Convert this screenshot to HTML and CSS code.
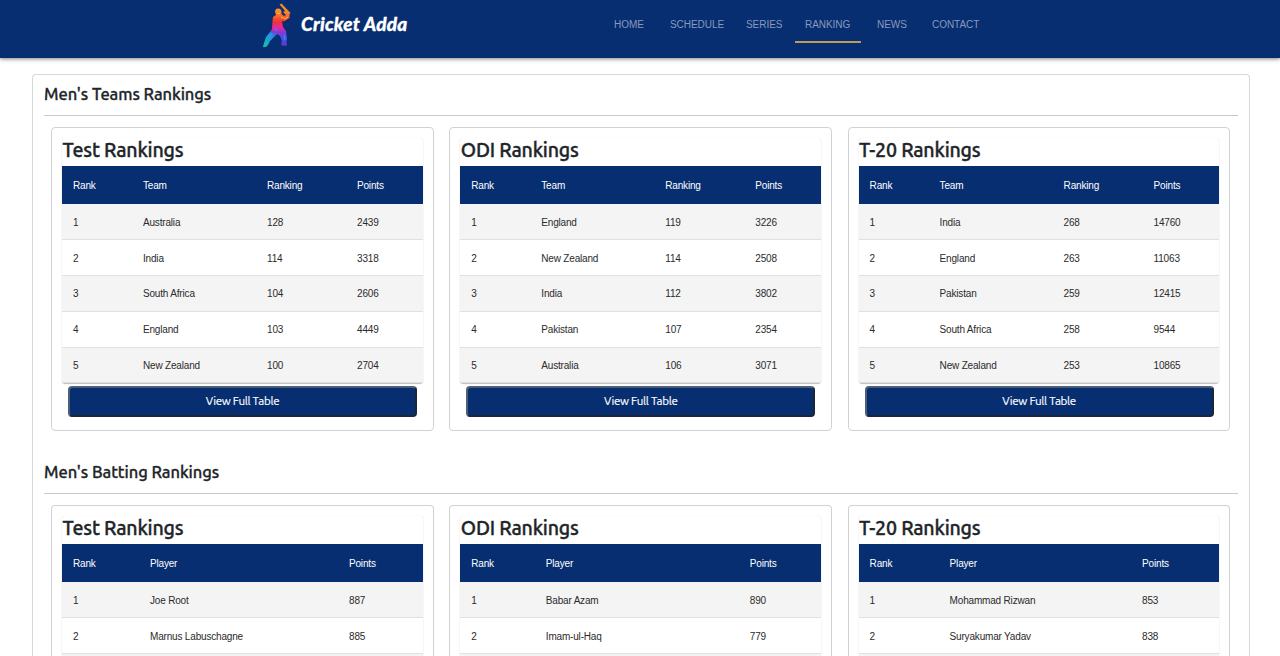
FILE: index.html
```
<!DOCTYPE html>
<html lang="en">
<head>
<meta charset="utf-8">
<title>Cricket Adda</title>
<link rel="stylesheet" href="styles.css">
</head>
<body>
<header class="topbar">
  <a class="brand">
    <svg class="batsman" width="30" height="46" viewBox="0 0 30 46">
      <defs>
        <linearGradient id="kit" x1="0" y1="0" x2="0" y2="1">
          <stop offset="0" stop-color="#fb9a35"/><stop offset=".2" stop-color="#f96a28"/>
          <stop offset=".36" stop-color="#f0303c"/><stop offset=".5" stop-color="#e52a9b"/>
          <stop offset=".64" stop-color="#8a35d6"/><stop offset=".8" stop-color="#3c55e8"/>
          <stop offset="1" stop-color="#6a32c4"/>
        </linearGradient>
        <linearGradient id="pad" x1="1" y1="0" x2="0" y2="1">
          <stop offset="0" stop-color="#4558e8"/><stop offset=".45" stop-color="#1c9ae0"/><stop offset="1" stop-color="#16c79a"/>
        </linearGradient>
      </defs>
      <path fill="#ef8d27" d="M16.500 1.500L18.500.500L27.500 10L25.500 12Z"/>
      <path fill="url(#kit)" d="M12 9Q12 5.500 15 5.500Q18.500 5.500 18.500 9L18.500 11L21 13L23 12L20 9L22 8L26.500 11L26.500 15L21 18.500L19 18L20 24L23 28L24 35L23.500 39L24 42L22 43L18 42L19 38L17 33L14 31L9 33L6 31L9 26L9.500 18L10 14L13 12Z"/>
      <path fill="url(#pad)" d="M7 29L14 31L11 34L7 38L5 42L3 44L0 44L1 40L3 34Z"/>
      <path fill="none" stroke="#ffc52e" stroke-width=".9" d="M14 10l3 1M18 14l4 2 3-2"/>
      <path fill="none" stroke="#2d9cf0" stroke-width="1" d="M12 25l2 3M21 32l1 5M9 30l-3 5"/>
    </svg>
    <span class="wordmark">Cricket Adda</span>
  </a>
  <nav class="menu">
    <a>HOME</a><a>SCHEDULE</a><a>SERIES</a><a class="active">RANKING</a><a>NEWS</a><a>CONTACT</a>
  </nav>
</header>
<main class="page">
  <section class="group">
    <h2>Men's Teams Rankings</h2>
    <div class="cards" id="teams"></div>
  </section>
  <section class="group last">
    <h2>Men's Batting Rankings</h2>
    <div class="cards" id="batting"></div>
  </section>
</main>
<script src="app.js"></script>
</body>
</html>
```
FILE: styles.css
```
* { box-sizing: border-box; }
body { margin: 0; height: 656px; overflow: hidden; background: #fff; color: #212529; font-family: "Liberation Sans", Arial, sans-serif; }
.topbar { display: flex; height: 58px; padding-left: 263px; background: #072e70; box-shadow: 0 1px 4px rgba(0,0,0,.5); }
.brand { display: flex; width: 341px; }
.batsman { margin-top: 3px; }
.wordmark { margin: 11px 0 0 8px; color: #fff; font: italic 900 19px/25px Lato, sans-serif; letter-spacing: .22px; white-space: nowrap; -webkit-text-stroke: .3px #fff; }
.menu { display: grid; grid-template-columns: 56px 76px 59px 72px 55px 70px; height: 43px; }
.menu a { width: max-content; height: 43px; padding: 0 10px; border-bottom: 2px solid transparent; color: #8799bd; font-size: 10px; line-height: 50px; letter-spacing: -.05px; }
.menu .active { width: 66px; border-color: #c29a55; }
.page { width: 1218px; height: 582px; margin: 16px 0 0 32px; padding: 0 11px; border: 1px solid #d5d7d9; border-bottom: 0; border-radius: 4px 4px 0 0; overflow: hidden; }
.group { height: 378px; }
.group.last { height: 203px; }
h2 { height: 41px; margin: 0 0 11px; padding-top: 8px; border-bottom: 1px solid #c8c9ca; font: 500 16.5px/23px Ubuntu, "Noto Sans", sans-serif; letter-spacing: -.06px; -webkit-text-stroke: .3px #212529; }
.cards { display: grid; grid-template-columns: repeat(3, 382.5px); column-gap: 15.8px; padding-left: 7px; }
.card { height: 304px; padding: 10px 9.5px 10px 10px; border: 1px solid #d0d2d4; border-radius: 4px; }
.last .card { height: 151px; border-bottom: 0; border-radius: 4px 4px 0 0; overflow: hidden; }
.sheet { width: 360.5px; border-radius: 3px; box-shadow: 0 1px 1px rgba(0,0,0,.25), 0 0 1px rgba(0,0,0,.15); overflow: hidden; }
h3 { height: 28px; margin: 0; padding-left: .5px; font: 500 19.6px/24px Ubuntu, "Noto Sans", sans-serif; letter-spacing: -.2px; -webkit-text-stroke: .35px #212529; }
table { width: 360.5px; border-collapse: collapse; table-layout: fixed; }
th, td { padding: 0 0 0 11px; text-align: left; font-size: 10px; font-weight: 400; letter-spacing: -.18px; white-space: nowrap; }
th { height: 38px; background: #072e70; color: #fff; }
td { height: 35.8px; padding-top: 1px; border-bottom: 1px solid #e0e0e0; color: #2b2b2b; }
tr:nth-child(odd) td { background: #f4f4f4; }
button { display: block; width: 349px; height: 30.500px; margin: 3px 0 0 6px; padding: 0 0 2px; border: 2px solid; border-color: #4e6078 #1b2739 #1b2739 #4e6078; border-radius: 4px; background: #072e70; color: #fff; font: 400 11.6px/20px Ubuntu, "Noto Sans", sans-serif; letter-spacing: -.3px; -webkit-text-stroke: .15px #fff; }
```
FILE: app.js
```
const titles = ["Test Rankings", "ODI Rankings", "T-20 Rankings"];
const teamHead = ["Rank", "Team", "Ranking", "Points"];
const playerHead = ["Rank", "Player", "Points"];
const teams = [
  [["Australia",128,2439],["India",114,3318],["South Africa",104,2606],["England",103,4449],["New Zealand",100,2704]],
  [["England",119,3226],["New Zealand",114,2508],["India",112,3802],["Pakistan",107,2354],["Australia",106,3071]],
  [["India",268,14760],["England",263,11063],["Pakistan",259,12415],["South Africa",258,9544],["New Zealand",253,10865]]
];
const batting = [
  [["Joe Root",887],["Marnus Labuschagne",885],["",""]],
  [["Babar Azam",890],["Imam-ul-Haq",779],["",""]],
  [["Mohammad Rizwan",853],["Suryakumar Yadav",838],["",""]]
];
const teamCols = [[70,124,90,76.5],[70,124,90,76.5],[70,124,90,76.5]];
const playerCols = [[77,199,84.5],[74.5,204,82],[80,192.5,88]];

function render(id, head, data, cols, footer) {
  document.getElementById(id).innerHTML = data.map((rows, i) => `
    <article class="card"><div class="sheet"><h3>${titles[i]}</h3>
    <table><colgroup>${cols[i].map(w => `<col style="width:${w}px">`).join("")}</colgroup>
    <thead><tr>${head.map(h => `<th>${h}</th>`).join("")}</tr></thead>
    <tbody>${rows.map((r, n) => `<tr><td>${r[0] ? n + 1 : ""}</td>${r.map(c => `<td>${c}</td>`).join("")}</tr>`).join("")}</tbody></table></div>
    ${footer}</article>`).join("");
}
render("teams", teamHead, teams, teamCols, "<button>View Full Table</button>");
render("batting", playerHead, batting, playerCols, "");
```
